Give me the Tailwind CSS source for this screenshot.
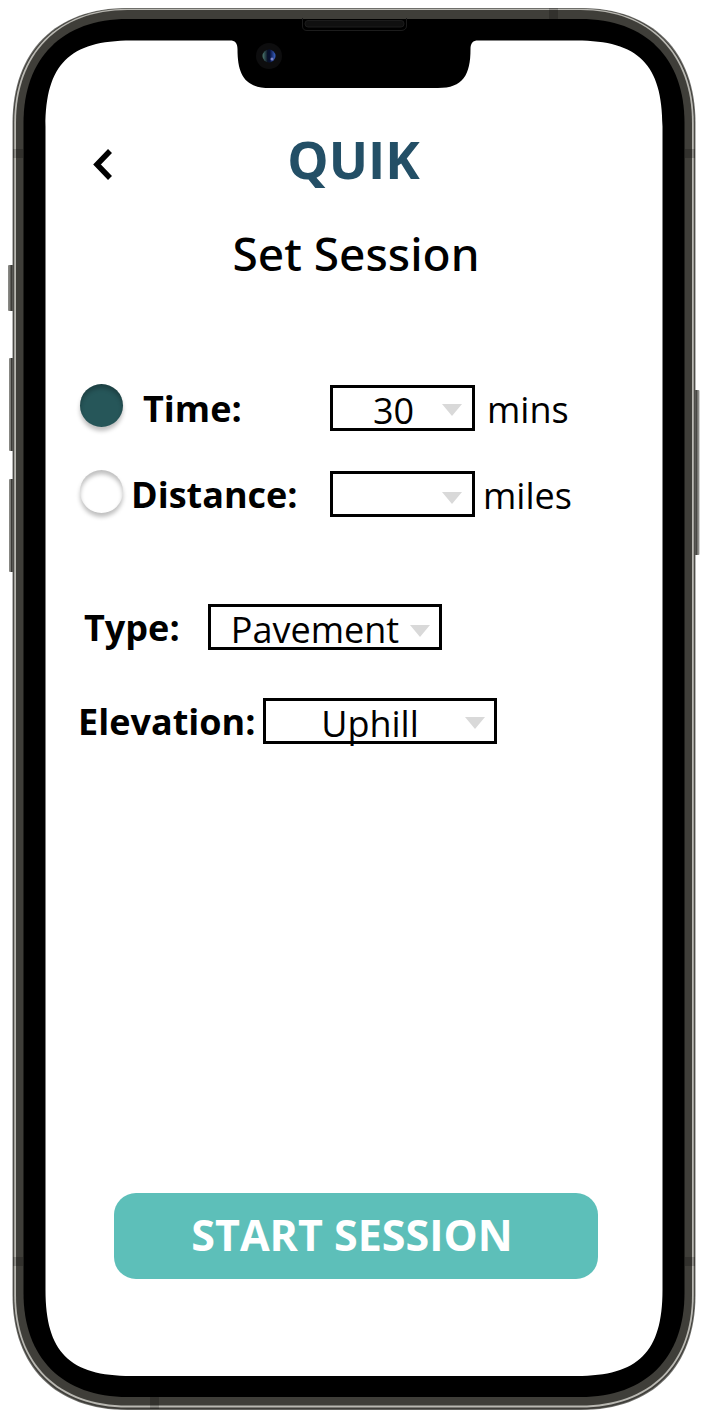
<!DOCTYPE html>
<html lang="en">
<head>
<meta charset="utf-8">
<meta name="viewport" content="width=device-width, initial-scale=1">
<title>QUIK - Set Session</title>
<script src="https://cdn.jsdelivr.net/npm/@tailwindcss/browser@4"></script>
</head>
<body class="bg-white text-black font-['Open_Sans','Noto_Sans',sans-serif]">
<div class="relative flex min-h-screen w-full flex-col">
  <!-- Phone body -->
  <svg class="absolute inset-0 h-full w-full" viewBox="0 0 706 1418" preserveAspectRatio="none" aria-hidden="true">
    <defs>
      <linearGradient id="keyL" x1="0" x2="1" y1="0" y2="0"><stop offset="0" stop-color="#8d8d89"/><stop offset=".35" stop-color="#777773"/><stop offset=".5" stop-color="#3b3a36"/><stop offset="1" stop-color="#4c4b48"/></linearGradient>
      <linearGradient id="keyR" x1="1" x2="0" y1="0" y2="0"><stop offset="0" stop-color="#a3a39f"/><stop offset=".35" stop-color="#777773"/><stop offset=".6" stop-color="#3b3a36"/><stop offset="1" stop-color="#4c4b48"/></linearGradient>
      <linearGradient id="lens" x1="0" x2="1" y1="0" y2="0"><stop offset="0" stop-color="#4d7a70"/><stop offset=".4" stop-color="#081024"/><stop offset=".6" stop-color="#0b1745"/><stop offset="1" stop-color="#3a63c8"/></linearGradient>
    </defs>
    <g fill="url(#keyL)">
      <rect x="8" y="265" width="6" height="46" rx="1"/>
      <rect x="9" y="358" width="5" height="93" rx="1"/>
      <rect x="9" y="479" width="5" height="93" rx="1"/>
    </g>
    <rect x="694" y="390" width="5.500" height="165" rx="1" fill="url(#keyR)"/>
    <path fill="#70706c" d="M12.500 123C12.500 51 55.500 8 127.500 8H580.500C652.500 8 695.500 51 695.500 123V1295C695.500 1367 652.500 1410 580.500 1410H127.500C55.500 1410 12.500 1367 12.500 1295Z"/>
    <path fill="#3f3e3a" d="M13.300 123C13.300 52 56.300 8.500 127.500 8.500H580.500C651.700 8.500 694.700 52 694.700 123V1295C694.700 1366 651.700 1409.300 580.500 1409.300H127.500C56.300 1409.300 13.300 1366 13.300 1295Z"/>
    <path fill="#b9b8b2" d="M14.200 123C14.200 53 57.500 8.800 127.500 8.800H580.500C650.500 8.800 693.800 53 693.800 123V1295C693.800 1365 650.500 1407.500 580.500 1407.500H127.500C57.500 1407.500 14.200 1365 14.200 1295Z"/>
    <path fill="#3f3e39" d="M16 123C16 54 58.500 10 127.500 10H580.500C649.500 10 692 54 692 123V1295C692 1364 649.500 1405.500 580.500 1405.500H127.500C58.500 1405.500 16 1364 16 1295Z"/>
    <path fill="#000" d="M23.500 123C23.500 58 62.500 19 127.500 19H580.500C645.500 19 684.500 58 684.500 123V1293C684.500 1358 645.500 1397 580.500 1397H127.500C62.500 1397 23.500 1358 23.500 1293Z"/>
    <g fill="#000" fill-opacity=".2">
      <rect x="13" y="149" width="10" height="9"/><rect x="685" y="149" width="10" height="9"/>
      <rect x="13" y="1257" width="10" height="9"/><rect x="685" y="1257" width="10" height="9"/>
      <rect x="549" y="8" width="9" height="11"/><rect x="150" y="1397" width="9" height="12"/>
    </g>
    <path fill="#fff" d="M45.500 126.500C45.500 64.500 69.500 40.500 131.500 40.500H230C235 40.500 237.500 43 237.500 49C237.500 75 245 88 270 88H438C463 88 470.500 75 470.500 49C470.500 43 473 40.500 478 40.500H576.500C638.500 40.500 662.500 64.500 662.500 126.500V1290C662.500 1352 638.500 1376 576.500 1376H131.500C69.500 1376 45.500 1352 45.500 1290Z"/>
    <path fill="none" stroke="#1c1c1c" d="M302.500 18V26C302.500 29 304 30.500 307 30.500H401C404 30.500 406.500 29 406.500 26V18"/>
    <rect x="305" y="20.500" width="99" height="6.500" rx="3" fill="#101010" stroke="#1c1c1c"/>
    <circle cx="269" cy="56" r="13" fill="#0d0d0e"/>
    <circle cx="269" cy="56" r="6.500" fill="url(#lens)"/>
    <path d="M270 49.500C266 53 267 60 270 62.500Z" fill="#07102e"/>
    <circle cx="272" cy="59" r="1.500" fill="#7d85c8"/>
  </svg>

  <main class="relative flex flex-1 flex-col pt-[129px] pr-[72px] pb-[139px] pl-[78px]">
    <header class="grid h-[60px] grid-cols-[40px_1fr_40px] items-center">
      <button type="button" aria-label="Back" class="flex h-10 w-10 items-center justify-end">
        <svg class="mt-[10px] mr-[3px] h-9 w-6" viewBox="0 0 24 36" fill="none" stroke="#000" stroke-width="5.500" aria-hidden="true"><path d="M19 5L6 18.500L19 32"/></svg>
      </button>
      <h1 class="pr-[5px] text-center text-[52px] leading-[60px] font-bold text-[#234f66]">QUIK</h1>
    </header>
    <h2 class="mt-[34px] text-center font-['Noto_Sans'] text-[46px] leading-[60px] font-medium">Set Session</h2>

    <form class="flex flex-1 flex-col text-[36px] leading-[46px]">
      <div class="mt-[102px] flex h-[46px] items-center">
        <div class="flex w-[252px] shrink-0 items-center">
          <input id="by-time" type="radio" name="goal" checked class="mb-[6px] ml-[2px] h-[43px] w-[43px] appearance-none rounded-full bg-white shadow-[0_4px_4px_rgba(0,0,0,0.25),inset_0_4px_4px_rgba(0,0,0,0.25)] checked:bg-[#265659]">
          <label for="by-time" class="ml-5 pt-[2px] font-bold">Time:</label>
        </div>
        <div class="relative flex h-[46px] w-[145px] items-center border-[3px] border-black">
          <select aria-label="Minutes" class="h-[54px] w-full shrink-0 appearance-none pt-[6px] pr-[18px] text-center"><option>30</option></select>
          <svg class="pointer-events-none absolute top-4 right-[10px] h-3 w-5" viewBox="0 0 20 12" aria-hidden="true"><path d="M0 0H20L10 12Z" fill="#d9d9d9"/></svg>
        </div>
        <span class="mt-1 ml-3">mins</span>
      </div>
      <div class="mt-10 flex h-[46px] items-center">
        <div class="flex w-[252px] shrink-0 items-center">
          <input id="by-distance" type="radio" name="goal" class="mb-[6px] ml-[2px] h-[43px] w-[43px] appearance-none rounded-full bg-white shadow-[0_4px_4px_rgba(0,0,0,0.25),inset_0_4px_4px_rgba(0,0,0,0.25)] checked:bg-[#265659]">
          <label for="by-distance" class="ml-2 pt-[2px] font-bold">Distance:</label>
        </div>
        <div class="relative flex h-[46px] w-[145px] items-center border-[3px] border-black">
          <select aria-label="Miles" class="h-[54px] w-full shrink-0 appearance-none pt-[6px] pr-[18px] text-center"><option></option></select>
          <svg class="pointer-events-none absolute top-[18px] right-[10px] h-3 w-5" viewBox="0 0 20 12" aria-hidden="true"><path d="M0 0H20L10 12Z" fill="#d9d9d9"/></svg>
        </div>
        <span class="mt-1 ml-2">miles</span>
      </div>
      <div class="mt-[87px] flex h-[46px] items-center">
        <label for="surface" class="ml-[6px] w-[124px] shrink-0 pt-[2px] font-bold">Type:</label>
        <div class="relative flex h-[46px] w-[234px] items-center border-[3px] border-black">
          <select id="surface" class="h-[54px] w-full shrink-0 appearance-none pt-[6px] pr-5 text-center"><option>Pavement</option></select>
          <svg class="pointer-events-none absolute top-[18px] right-[9px] h-3 w-5" viewBox="0 0 20 12" aria-hidden="true"><path d="M0 0H20L10 12Z" fill="#d9d9d9"/></svg>
        </div>
      </div>
      <div class="mt-12 flex h-[46px] items-center">
        <label for="elevation" class="w-[185px] shrink-0 pt-[2px] font-bold">Elevation:</label>
        <div class="relative flex h-[46px] w-[234px] items-center border-[3px] border-black">
          <select id="elevation" class="h-[54px] w-full shrink-0 appearance-none pt-[6px] pr-5 text-center"><option>Uphill</option></select>
          <svg class="pointer-events-none absolute top-4 right-[9px] h-3 w-5" viewBox="0 0 20 12" aria-hidden="true"><path d="M0 0H20L10 12Z" fill="#d9d9d9"/></svg>
        </div>
      </div>
      <button type="button" class="mx-9 mt-auto h-[86px] rounded-[22px] bg-[#5dbfb9] pr-2 pb-[2px] text-[43px] font-bold text-white">START SESSION</button>
    </form>
  </main>
</div>
</body>
</html>
